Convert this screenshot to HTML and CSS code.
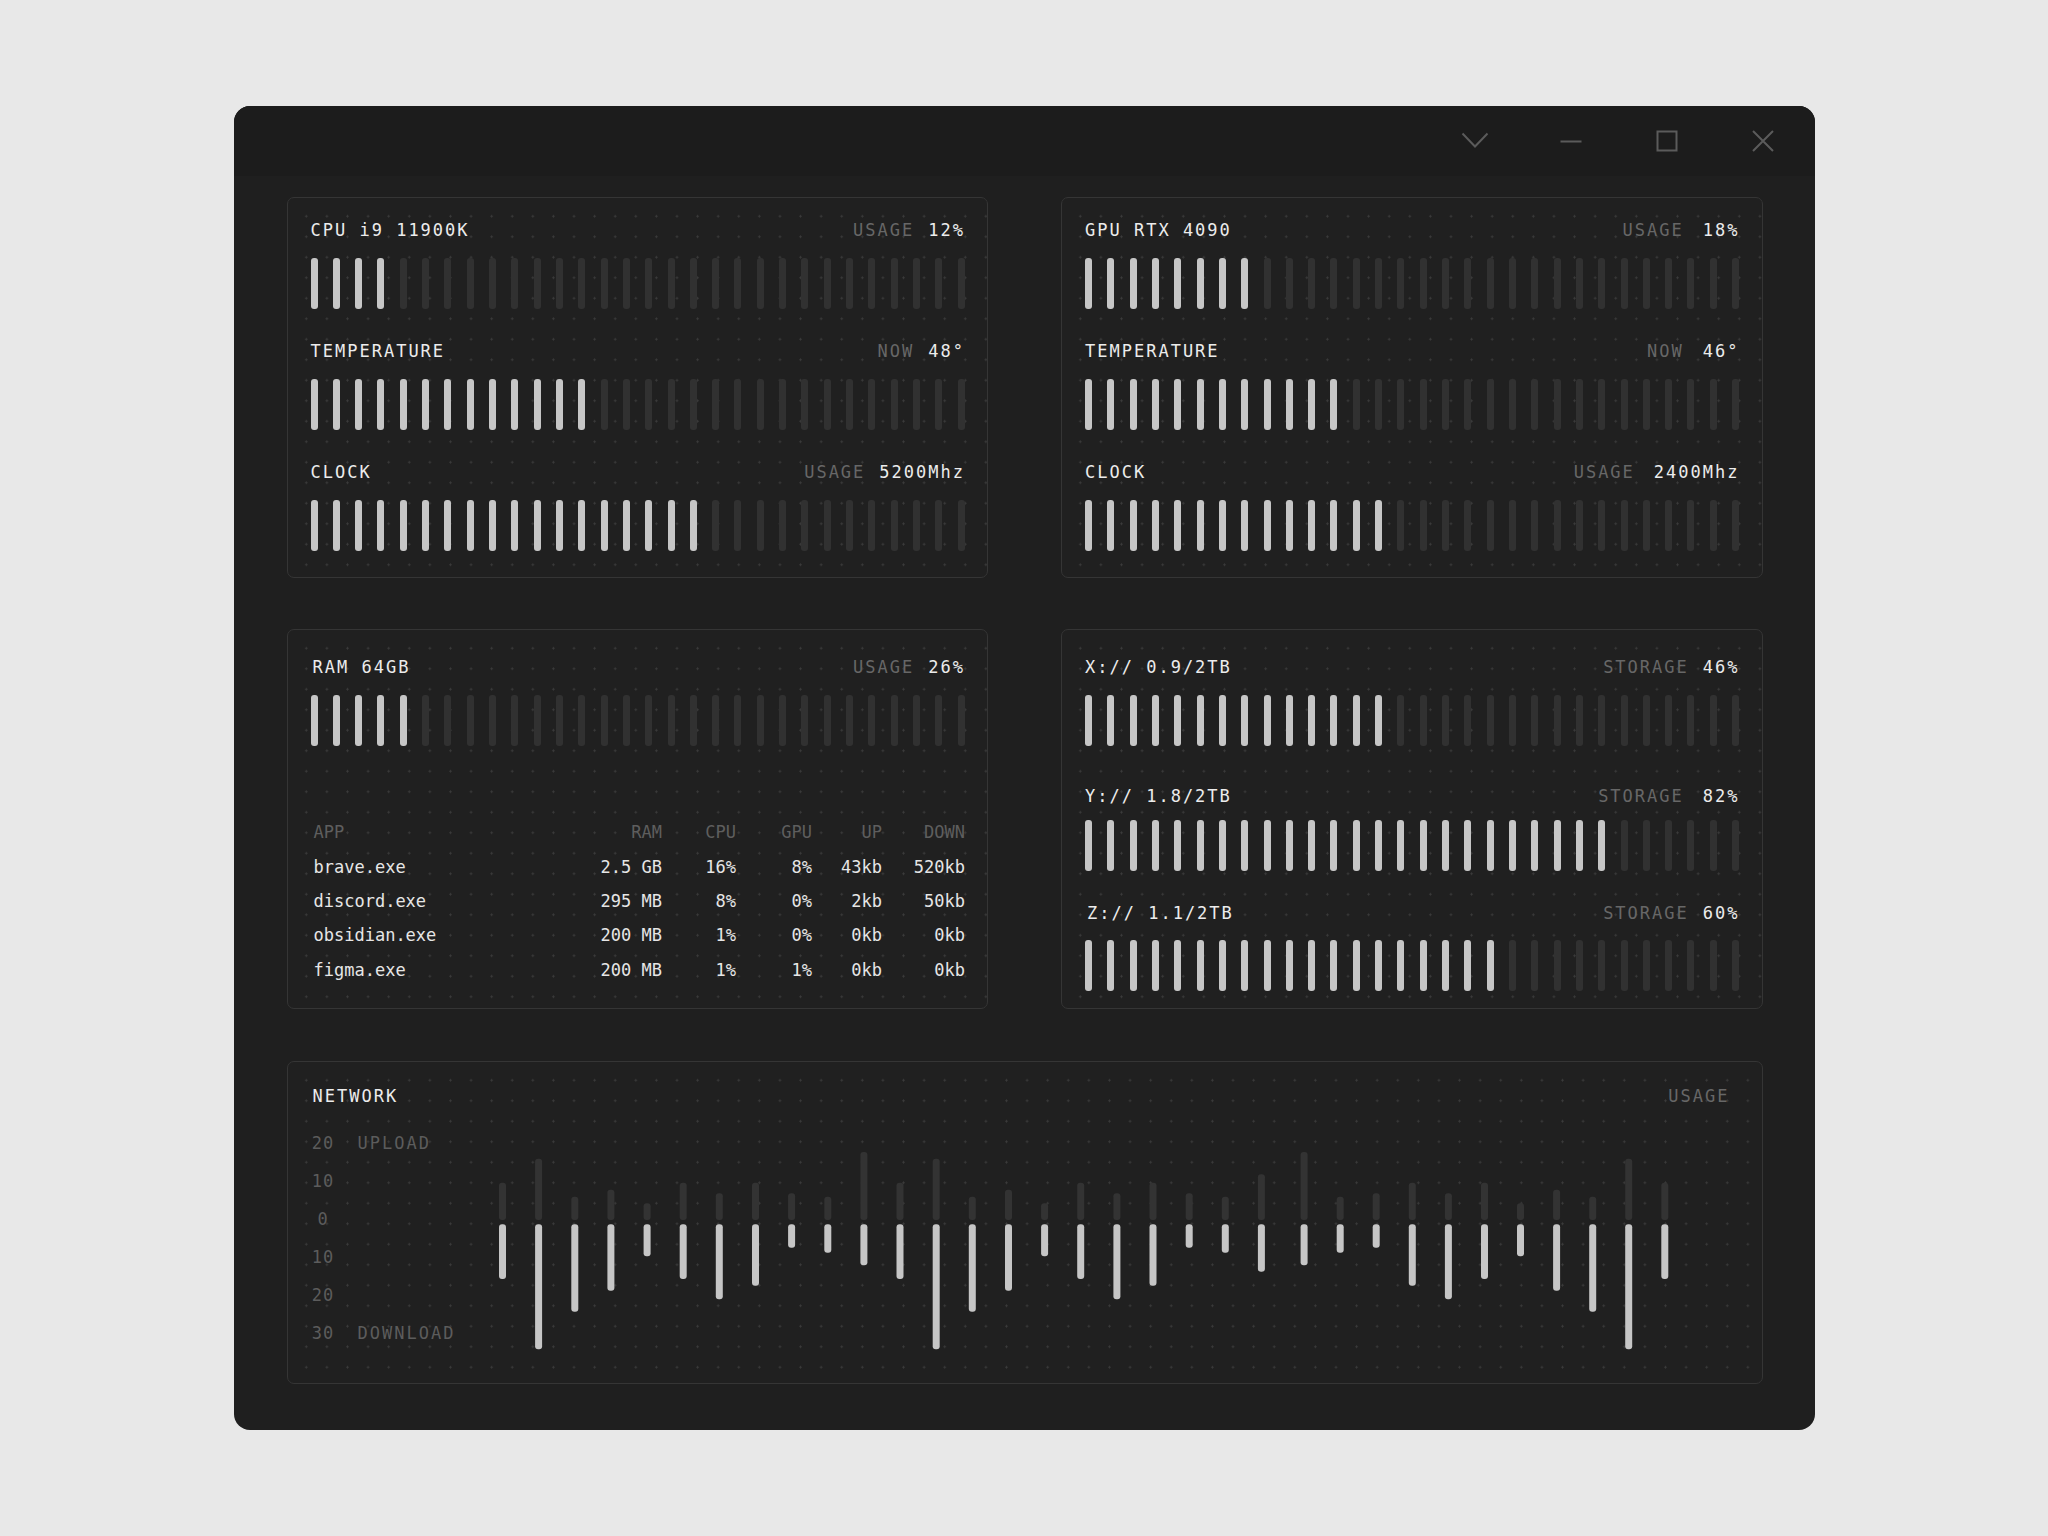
FILE: index.html
```html
<!DOCTYPE html>
<html lang="en">
<head>
<meta charset="utf-8">
<title>System Monitor</title>
<link rel="stylesheet" href="styles.css">
</head>
<body>
<div class="page">
  <div class="window">
    <div class="titlebar">
      <svg class="tb-icon" viewBox="0 0 28 28" width="28" height="28"><path d="M1.5 6.5 L14 19.5 L26.5 6.5" /></svg>
      <svg class="tb-icon" viewBox="0 0 28 28" width="28" height="28"><path d="M3.5 14.5 H24.5" /></svg>
      <svg class="tb-icon" viewBox="0 0 28 28" width="28" height="28"><rect x="4.5" y="4.5" width="19" height="19" /></svg>
      <svg class="tb-icon" viewBox="0 0 28 28" width="28" height="28"><path d="M4 4 L24 24 M24 4 L4 24" /></svg>
    </div>
    <div class="content">
      <section class="panel panel-top">
        <div class="head"><span class="title">CPU i9 11900K</span><span class="meta"><span class="lbl">USAGE</span><span class="val">12%</span></span></div>
        <div class="bars"><i class="on"></i><i class="on"></i><i class="on"></i><i class="on"></i><i></i><i></i><i></i><i></i><i></i><i></i><i></i><i></i><i></i><i></i><i></i><i></i><i></i><i></i><i></i><i></i><i></i><i></i><i></i><i></i><i></i><i></i><i></i><i></i><i></i><i></i></div>
        <div class="head sec"><span class="title">TEMPERATURE</span><span class="meta"><span class="lbl">NOW</span><span class="val">48°</span></span></div>
        <div class="bars"><i class="on"></i><i class="on"></i><i class="on"></i><i class="on"></i><i class="on"></i><i class="on"></i><i class="on"></i><i class="on"></i><i class="on"></i><i class="on"></i><i class="on"></i><i class="on"></i><i class="on"></i><i></i><i></i><i></i><i></i><i></i><i></i><i></i><i></i><i></i><i></i><i></i><i></i><i></i><i></i><i></i><i></i><i></i></div>
        <div class="head sec"><span class="title">CLOCK</span><span class="meta"><span class="lbl">USAGE</span><span class="val">5200Mhz</span></span></div>
        <div class="bars"><i class="on"></i><i class="on"></i><i class="on"></i><i class="on"></i><i class="on"></i><i class="on"></i><i class="on"></i><i class="on"></i><i class="on"></i><i class="on"></i><i class="on"></i><i class="on"></i><i class="on"></i><i class="on"></i><i class="on"></i><i class="on"></i><i class="on"></i><i class="on"></i><i></i><i></i><i></i><i></i><i></i><i></i><i></i><i></i><i></i><i></i><i></i><i></i></div>
      </section>

      <section class="panel panel-top">
        <div class="head"><span class="title">GPU RTX 4090</span><span class="meta"><span class="lbl">USAGE</span><span class="val wide">18%</span></span></div>
        <div class="bars"><i class="on"></i><i class="on"></i><i class="on"></i><i class="on"></i><i class="on"></i><i class="on"></i><i class="on"></i><i class="on"></i><i></i><i></i><i></i><i></i><i></i><i></i><i></i><i></i><i></i><i></i><i></i><i></i><i></i><i></i><i></i><i></i><i></i><i></i><i></i><i></i><i></i><i></i></div>
        <div class="head sec"><span class="title">TEMPERATURE</span><span class="meta"><span class="lbl">NOW</span><span class="val wide">46°</span></span></div>
        <div class="bars"><i class="on"></i><i class="on"></i><i class="on"></i><i class="on"></i><i class="on"></i><i class="on"></i><i class="on"></i><i class="on"></i><i class="on"></i><i class="on"></i><i class="on"></i><i class="on"></i><i></i><i></i><i></i><i></i><i></i><i></i><i></i><i></i><i></i><i></i><i></i><i></i><i></i><i></i><i></i><i></i><i></i><i></i></div>
        <div class="head sec"><span class="title">CLOCK</span><span class="meta"><span class="lbl">USAGE</span><span class="val wide">2400Mhz</span></span></div>
        <div class="bars"><i class="on"></i><i class="on"></i><i class="on"></i><i class="on"></i><i class="on"></i><i class="on"></i><i class="on"></i><i class="on"></i><i class="on"></i><i class="on"></i><i class="on"></i><i class="on"></i><i class="on"></i><i class="on"></i><i></i><i></i><i></i><i></i><i></i><i></i><i></i><i></i><i></i><i></i><i></i><i></i><i></i><i></i><i></i><i></i></div>
      </section>

      <section class="panel panel-mid">
        <div class="head"><span class="title ind">RAM 64GB</span><span class="meta"><span class="lbl">USAGE</span><span class="val">26%</span></span></div>
        <div class="bars"><i class="on"></i><i class="on"></i><i class="on"></i><i class="on"></i><i class="on"></i><i></i><i></i><i></i><i></i><i></i><i></i><i></i><i></i><i></i><i></i><i></i><i></i><i></i><i></i><i></i><i></i><i></i><i></i><i></i><i></i><i></i><i></i><i></i><i></i><i></i></div>
        <div class="table">
          <div class="tr th"><span class="app">APP</span><span>RAM</span><span>CPU</span><span>GPU</span><span>UP</span><span>DOWN</span></div>
          <div class="tr"><span class="app">brave.exe</span><span>2.5 GB</span><span>16%</span><span>8%</span><span>43kb</span><span>520kb</span></div>
          <div class="tr"><span class="app">discord.exe</span><span>295 MB</span><span>8%</span><span>0%</span><span>2kb</span><span>50kb</span></div>
          <div class="tr"><span class="app">obsidian.exe</span><span>200 MB</span><span>1%</span><span>0%</span><span>0kb</span><span>0kb</span></div>
          <div class="tr"><span class="app">figma.exe</span><span>200 MB</span><span>1%</span><span>1%</span><span>0kb</span><span>0kb</span></div>
        </div>
      </section>

      <section class="panel panel-mid">
        <div class="head"><span class="title">X:// 0.9/2TB</span><span class="meta"><span class="lbl">STORAGE</span><span class="val">46%</span></span></div>
        <div class="bars"><i class="on"></i><i class="on"></i><i class="on"></i><i class="on"></i><i class="on"></i><i class="on"></i><i class="on"></i><i class="on"></i><i class="on"></i><i class="on"></i><i class="on"></i><i class="on"></i><i class="on"></i><i class="on"></i><i></i><i></i><i></i><i></i><i></i><i></i><i></i><i></i><i></i><i></i><i></i><i></i><i></i><i></i><i></i><i></i></div>
        <div class="head sec-y"><span class="title">Y:// 1.8/2TB</span><span class="meta"><span class="lbl">STORAGE</span><span class="val wide">82%</span></span></div>
        <div class="bars bars-y"><i class="on"></i><i class="on"></i><i class="on"></i><i class="on"></i><i class="on"></i><i class="on"></i><i class="on"></i><i class="on"></i><i class="on"></i><i class="on"></i><i class="on"></i><i class="on"></i><i class="on"></i><i class="on"></i><i class="on"></i><i class="on"></i><i class="on"></i><i class="on"></i><i class="on"></i><i class="on"></i><i class="on"></i><i class="on"></i><i class="on"></i><i class="on"></i><i></i><i></i><i></i><i></i><i></i><i></i></div>
        <div class="head sec"><span class="title ind">Z:// 1.1/2TB</span><span class="meta"><span class="lbl">STORAGE</span><span class="val">60%</span></span></div>
        <div class="bars bars-z"><i class="on"></i><i class="on"></i><i class="on"></i><i class="on"></i><i class="on"></i><i class="on"></i><i class="on"></i><i class="on"></i><i class="on"></i><i class="on"></i><i class="on"></i><i class="on"></i><i class="on"></i><i class="on"></i><i class="on"></i><i class="on"></i><i class="on"></i><i class="on"></i><i class="on"></i><i></i><i></i><i></i><i></i><i></i><i></i><i></i><i></i><i></i><i></i><i></i></div>
      </section>

      <section class="panel panel-net">
        <div class="head"><span class="title ind0">NETWORK</span><span class="meta net-meta"><span class="lbl">USAGE</span></span></div>
        <div class="net-body">
          <div class="axis">
            <div class="ax"><span class="num">20</span><span class="word">UPLOAD</span></div>
            <div class="ax"><span class="num">10</span></div>
            <div class="ax"><span class="num">0</span></div>
            <div class="ax"><span class="num">10</span></div>
            <div class="ax"><span class="num">20</span></div>
            <div class="ax"><span class="num">30</span><span class="word">DOWNLOAD</span></div>
          </div>
          <svg class="chart" width="1260" height="228" viewBox="0 0 1260 228">
            <g class="up">
              <rect x="20" y="58.7" width="7" height="37.3" rx="3"/>
              <rect x="56.1" y="34.7" width="7" height="61.3" rx="3"/>
              <rect x="92.3" y="72.7" width="7" height="23.3" rx="3"/>
              <rect x="128.4" y="65.7" width="7" height="30.3" rx="3"/>
              <rect x="164.6" y="79.3" width="7" height="16.7" rx="3"/>
              <rect x="200.7" y="58.7" width="7" height="37.3" rx="3"/>
              <rect x="236.8" y="69.3" width="7" height="26.7" rx="3"/>
              <rect x="273" y="58.7" width="7" height="37.3" rx="3"/>
              <rect x="309.1" y="69.3" width="7" height="26.7" rx="3"/>
              <rect x="345.3" y="72.7" width="7" height="23.3" rx="3"/>
              <rect x="381.4" y="28" width="7" height="68" rx="3"/>
              <rect x="417.5" y="58.7" width="7" height="37.3" rx="3"/>
              <rect x="453.7" y="34.7" width="7" height="61.3" rx="3"/>
              <rect x="489.8" y="72.7" width="7" height="23.3" rx="3"/>
              <rect x="526" y="65.7" width="7" height="30.3" rx="3"/>
              <rect x="562.1" y="79.3" width="7" height="16.7" rx="3"/>
              <rect x="598.2" y="58.7" width="7" height="37.3" rx="3"/>
              <rect x="634.4" y="69.3" width="7" height="26.7" rx="3"/>
              <rect x="670.5" y="58.7" width="7" height="37.3" rx="3"/>
              <rect x="706.7" y="69.3" width="7" height="26.7" rx="3"/>
              <rect x="742.8" y="72.7" width="7" height="23.3" rx="3"/>
              <rect x="778.9" y="50.3" width="7" height="45.7" rx="3"/>
              <rect x="821.6" y="28" width="7" height="68" rx="3"/>
              <rect x="857.7" y="72.7" width="7" height="23.3" rx="3"/>
              <rect x="893.7" y="69.3" width="7" height="26.7" rx="3"/>
              <rect x="929.8" y="58.7" width="7" height="37.3" rx="3"/>
              <rect x="965.9" y="69.3" width="7" height="26.7" rx="3"/>
              <rect x="1002" y="58.7" width="7" height="37.3" rx="3"/>
              <rect x="1038" y="79.3" width="7" height="16.7" rx="3"/>
              <rect x="1074.1" y="65.7" width="7" height="30.3" rx="3"/>
              <rect x="1110.2" y="72.7" width="7" height="23.3" rx="3"/>
              <rect x="1146.2" y="34.7" width="7" height="61.3" rx="3"/>
              <rect x="1182.3" y="58.7" width="7" height="37.3" rx="3"/>
            </g>
            <g class="down">
              <rect x="20" y="100.3" width="7" height="54.7" rx="3"/>
              <rect x="56.1" y="100.3" width="7" height="125" rx="3"/>
              <rect x="92.3" y="100.3" width="7" height="87.4" rx="3"/>
              <rect x="128.4" y="100.3" width="7" height="66.4" rx="3"/>
              <rect x="164.6" y="100.3" width="7" height="32" rx="3"/>
              <rect x="200.7" y="100.3" width="7" height="54.7" rx="3"/>
              <rect x="236.8" y="100.3" width="7" height="75" rx="3"/>
              <rect x="273" y="100.3" width="7" height="61.4" rx="3"/>
              <rect x="309.1" y="100.3" width="7" height="23.4" rx="3"/>
              <rect x="345.3" y="100.3" width="7" height="28.4" rx="3"/>
              <rect x="381.4" y="100.3" width="7" height="41" rx="3"/>
              <rect x="417.5" y="100.3" width="7" height="54.7" rx="3"/>
              <rect x="453.7" y="100.3" width="7" height="125" rx="3"/>
              <rect x="489.8" y="100.3" width="7" height="87.4" rx="3"/>
              <rect x="526" y="100.3" width="7" height="66.4" rx="3"/>
              <rect x="562.1" y="100.3" width="7" height="32" rx="3"/>
              <rect x="598.2" y="100.3" width="7" height="54.7" rx="3"/>
              <rect x="634.4" y="100.3" width="7" height="75" rx="3"/>
              <rect x="670.5" y="100.3" width="7" height="61.4" rx="3"/>
              <rect x="706.7" y="100.3" width="7" height="23.4" rx="3"/>
              <rect x="742.8" y="100.3" width="7" height="28.4" rx="3"/>
              <rect x="778.9" y="100.3" width="7" height="47.4" rx="3"/>
              <rect x="821.6" y="100.3" width="7" height="41" rx="3"/>
              <rect x="857.7" y="100.3" width="7" height="28.4" rx="3"/>
              <rect x="893.7" y="100.3" width="7" height="23.4" rx="3"/>
              <rect x="929.8" y="100.3" width="7" height="61.4" rx="3"/>
              <rect x="965.9" y="100.3" width="7" height="75" rx="3"/>
              <rect x="1002" y="100.3" width="7" height="54.7" rx="3"/>
              <rect x="1038" y="100.3" width="7" height="32" rx="3"/>
              <rect x="1074.1" y="100.3" width="7" height="66.4" rx="3"/>
              <rect x="1110.2" y="100.3" width="7" height="87.4" rx="3"/>
              <rect x="1146.2" y="100.3" width="7" height="125" rx="3"/>
              <rect x="1182.3" y="100.3" width="7" height="54.7" rx="3"/>
            </g>
          </svg>
        </div>
      </section>
    </div>
  </div>
</div>
</body>
</html>
```

FILE: styles.css
```css
* { box-sizing: border-box; }

html, body {
  margin: 0;
  padding: 0;
}

body {
  background: #e8e8e8;
  font-family: "DejaVu Sans Mono", "Liberation Mono", monospace;
  font-size: 17px;
  color: #e6e6e6;
}

.page {
  width: 2048px;
  height: 1536px;
  display: flex;
  align-items: center;
  justify-content: center;
}

.window {
  width: 1581px;
  height: 1324px;
  background: #1f1f1f;
  border-radius: 16px;
  overflow: hidden;
}

.titlebar {
  height: 70px;
  background: #1c1c1c;
  display: flex;
  justify-content: flex-end;
  align-items: center;
  gap: 68px;
  padding-right: 38px;
}

.tb-icon {
  display: block;
  fill: none;
  stroke: #5b5b5b;
  stroke-width: 2;
}

.content {
  display: grid;
  grid-template-columns: 1fr 1fr;
  column-gap: 73px;
  row-gap: 51px;
  padding: 21px 52px 0 53px;
}

.panel {
  border: 1px solid #353535;
  border-radius: 7px;
  background-color: #202020;
  background-image: radial-gradient(circle at center, #3b3b3b 0 0.9px, transparent 1.3px);
  background-size: 20.6px 20.5px;
  background-position: 8px 8px;
  padding: 22px 22px 26px 23px;
}

.panel-mid {
  padding-top: 27px;
  padding-bottom: 17px;
}

.panel-net {
  grid-column: 1 / 3;
  margin-top: 1px;
  padding: 24px 32px 31px 24px;
}

.head {
  height: 20px;
  line-height: 20px;
  display: flex;
  justify-content: space-between;
  align-items: center;
  letter-spacing: 2px;
  white-space: nowrap;
}

.head.sec { margin-top: 32px; }
.head.sec-y { margin-top: 40px; }

.title { color: #ececec; }
.title.ind { padding-left: 2px; }
.title.ind0 { padding-left: 1px; }

.meta { display: flex; }
.lbl { color: #676767; }
.val { color: #ececec; margin-left: 14px; }
.val.wide { margin-left: 19px; }

.bars {
  margin-top: 18px;
  height: 51px;
  display: flex;
  justify-content: space-between;
}
.bars.bars-y { margin-top: 14px; }
.bars.bars-z { margin-top: 17px; }

.bars i {
  display: block;
  width: 7px;
  height: 51px;
  border-radius: 3px;
  background: #313131;
}
.bars i.on { background: #c6c6c6; }

.table {
  margin-top: 69px;
}
.tr {
  display: grid;
  grid-template-columns: 1fr 120px 74px 76px 70px 83px;
  height: 34.4px;
  align-items: center;
  color: #e6e6e6;
  white-space: nowrap;
}
.tr span { text-align: right; }
.tr span.app { text-align: left; padding-left: 3px; }
.tr.th { color: #5e5e5e; }

.net-body {
  margin-top: 17.5px;
  display: flex;
  height: 228px;
}

.axis {
  width: 167px;
  flex: none;
  color: #5c5c5c;
}
.ax {
  height: 38px;
  line-height: 38px;
  display: flex;
  letter-spacing: 1px;
  white-space: nowrap;
}
.ax .num {
  width: 23px;
  text-align: center;
}
.ax .word {
  margin-left: 23px;
  letter-spacing: 2px;
}

.chart {
  display: block;
  flex: none;
  overflow: visible;
}
.chart .up rect { fill: #333333; }
.chart .down rect { fill: #c6c6c6; }
```
